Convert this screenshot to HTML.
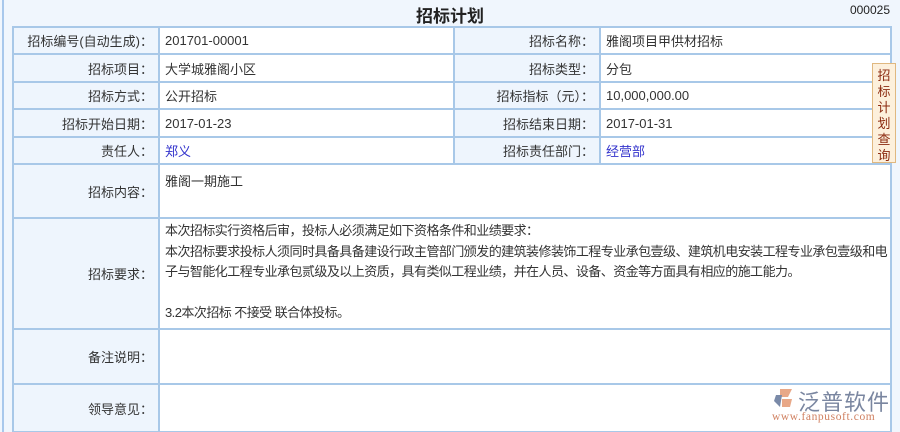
<!DOCTYPE html>
<html><head><meta charset="utf-8"><style>
*{margin:0;padding:0;box-sizing:border-box}
body{width:900px;height:432px;background:#f0f6fd;font-family:"Liberation Sans","Noto Sans CJK SC",sans-serif;font-size:13px;color:#333;position:relative;overflow:hidden}
.lb{position:absolute;left:2px;top:0;width:2px;height:432px;background:#a8c8ec}
h1{position:absolute;left:0;width:900px;top:2px;text-align:center;font-size:17px;font-weight:bold;color:#222}
.no{position:absolute;right:10px;top:3px;font-size:12px;color:#222}
.grid{position:absolute;left:12px;top:26px;width:880px;height:406px;background:#a8c8e8}
.c{position:absolute;white-space:nowrap;display:flex;align-items:center;padding:0 5px;overflow:hidden}
.l{background:#eef5fd;justify-content:flex-end}
.v{background:#fff}
.blue{color:#3333cc}
.tab{position:absolute;left:872px;top:63px;width:24px;height:100px;background:#fdf0dc;border:1px solid #e0b880;color:#8b2a10;font-size:13px;text-align:center;line-height:16px;padding-top:4px}
.logo{position:absolute;left:770px;top:384px}
</style></head><body>
<div class="lb"></div>
<h1>招标计划</h1>
<div class="no">000025</div>
<div class="grid"></div>
<div class="c l" style="left:14px;top:28px;width:144px;height:25px">招标编号(自动生成)：</div>
<div class="c v" style="left:160px;top:28px;width:293px;height:25px">201701-00001</div>
<div class="c l" style="left:455px;top:28px;width:144px;height:25px">招标名称：</div>
<div class="c v" style="left:601px;top:28px;width:289px;height:25px">雅阁项目甲供材招标</div>

<div class="c l" style="left:14px;top:55px;width:144px;height:26px">招标项目：</div>
<div class="c v" style="left:160px;top:55px;width:293px;height:26px">大学城雅阁小区</div>
<div class="c l" style="left:455px;top:55px;width:144px;height:26px">招标类型：</div>
<div class="c v" style="left:601px;top:55px;width:289px;height:26px">分包</div>

<div class="c l" style="left:14px;top:83px;width:144px;height:25px">招标方式：</div>
<div class="c v" style="left:160px;top:83px;width:293px;height:25px">公开招标</div>
<div class="c l" style="left:455px;top:83px;width:144px;height:25px">招标指标（元）：</div>
<div class="c v" style="left:601px;top:83px;width:289px;height:25px">10,000,000.00</div>

<div class="c l" style="left:14px;top:110px;width:144px;height:26px">招标开始日期：</div>
<div class="c v" style="left:160px;top:110px;width:293px;height:26px">2017-01-23</div>
<div class="c l" style="left:455px;top:110px;width:144px;height:26px">招标结束日期：</div>
<div class="c v" style="left:601px;top:110px;width:289px;height:26px">2017-01-31</div>

<div class="c l" style="left:14px;top:138px;width:144px;height:25px">责任人：</div>
<div class="c v blue" style="left:160px;top:138px;width:293px;height:25px">郑义</div>
<div class="c l" style="left:455px;top:138px;width:144px;height:25px">招标责任部门：</div>
<div class="c v blue" style="left:601px;top:138px;width:289px;height:25px">经营部</div>

<div class="c l" style="left:14px;top:165px;width:144px;height:52px">招标内容：</div>
<div class="c v" style="left:160px;top:165px;width:730px;height:52px;align-items:flex-start;padding-top:6px">雅阁一期施工</div>

<div class="c l" style="left:14px;top:219px;width:144px;height:109px">招标要求：</div>
<div class="c v" style="left:160px;top:219px;width:730px;height:109px;display:block;line-height:20.5px;padding-top:2px;letter-spacing:-0.55px">本次招标实行资格后审，投标人必须满足如下资格条件和业绩要求：<br>本次招标要求投标人须同时具备具备建设行政主管部门颁发的建筑装修装饰工程专业承包壹级、建筑机电安装工程专业承包壹级和电<br>子与智能化工程专业承包贰级及以上资质，具有类似工程业绩，并在人员、设备、资金等方面具有相应的施工能力。<br><br>3.2本次招标 不接受 联合体投标。</div>

<div class="c l" style="left:14px;top:330px;width:144px;height:53px">备注说明：</div>
<div class="c v" style="left:160px;top:330px;width:730px;height:53px"></div>

<div class="c l" style="left:14px;top:385px;width:144px;height:46px">领导意见：</div>
<div class="c v" style="left:160px;top:385px;width:730px;height:46px"></div>

<div class="tab">招<br>标<br>计<br>划<br>查<br>询</div>
<div class="logo">
<svg width="24" height="22" style="position:absolute;left:2px;top:3px"><path d="M8 2 L20 2 L16 10 L8 10 Z" fill="#e8a888"/><path d="M4 8 L10 8 L8 20 L2 14 Z" fill="#7a8aa8"/><path d="M10 12 L20 12 L18 20 L10 20 Z" fill="#e8a888"/></svg>
<div style="position:absolute;left:28px;top:1px;font-size:22px;color:#7a86a0;white-space:nowrap;letter-spacing:1px">泛普软件</div>
<div style="position:absolute;left:2px;top:27px;font-size:11.5px;color:#d08060;font-family:'Liberation Serif',serif;white-space:nowrap;letter-spacing:0.6px">www.fanpusoft.com</div>
</div>
</body></html>
